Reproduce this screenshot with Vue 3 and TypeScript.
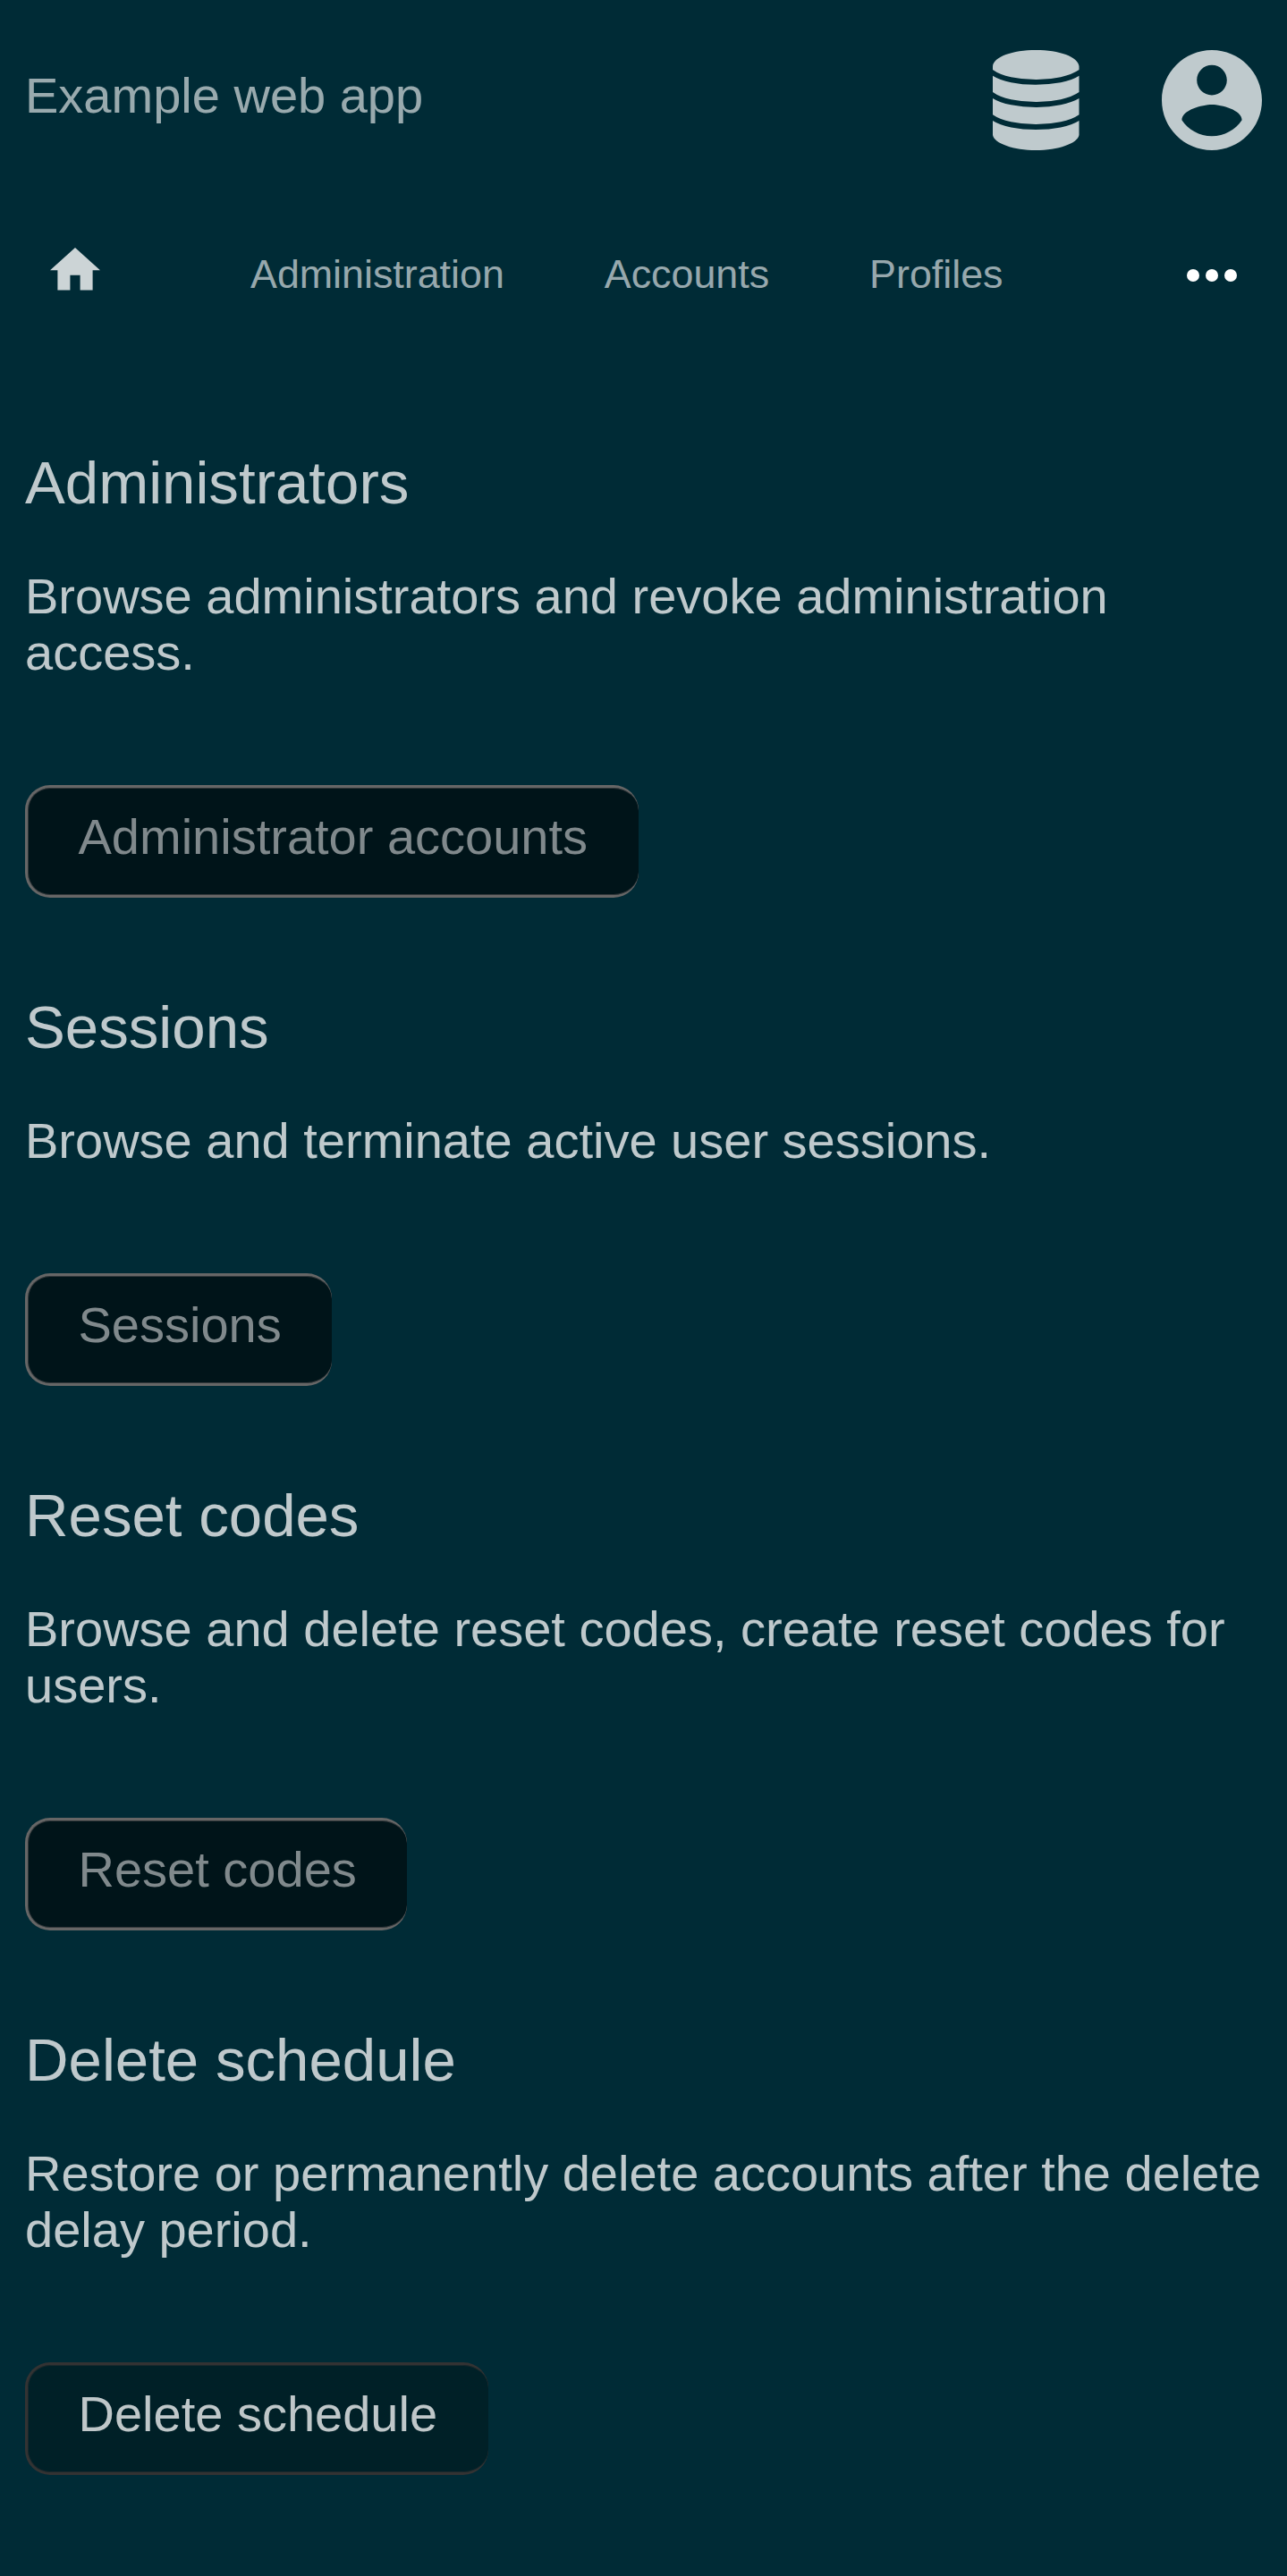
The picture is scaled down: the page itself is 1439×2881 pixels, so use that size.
<script setup lang="ts">
interface Section {
  title: string
  text: string
  action: string
  enabled?: boolean
}

const links: string[] = ['Administration', 'Accounts', 'Profiles']

const sections: Section[] = [
  {
    title: 'Administrators',
    text: 'Browse administrators and revoke administration access.',
    action: 'Administrator accounts',
  },
  {
    title: 'Sessions',
    text: 'Browse and terminate active user sessions.',
    action: 'Sessions',
  },
  {
    title: 'Reset codes',
    text: 'Browse and delete reset codes, create reset codes for users.',
    action: 'Reset codes',
  },
  {
    title: 'Delete schedule',
    text: 'Restore or permanently delete accounts after the delete delay period.',
    action: 'Delete schedule',
    enabled: true,
  },
]
</script>

<template>
  <div class="page">
    <header class="header">
      <div class="title">Example web app</div>
      <svg class="database" viewBox="0 0 96.5 112" aria-hidden="true">
        <path d="M0 18C1 7.500 22 0 48.250 0S95.500 7.500 96.500 18V22Q89 27.300 76 30.200T48.250 33T20.500 30.200T0 22Z" />
        <path d="M0 28.800Q7.500 33.600 20.500 36.200T48.250 38.700T76 36.200T96.500 28.800V47Q89 52.300 76 55.200T48.250 58T20.500 55.200T0 47Z" />
        <path d="M0 54Q7.500 58.800 20.500 61.300T48.250 63.900T76 61.300T96.500 54V72.200Q89 77.500 76 80.300T48.250 83.100T20.500 80.300T0 72.200Z" />
        <path d="M0 79Q7.500 83.800 20.500 86.400T48.250 89T76 86.400T96.500 79V95C95 104.500 73 112 48.250 112S1.500 104.500 0 95Z" />
      </svg>
      <svg class="account" viewBox="2 2 20 20" aria-hidden="true">
        <path d="M12 2C6.48 2 2 6.48 2 12s4.48 10 10 10 10-4.48 10-10S17.52 2 12 2zm0 3c1.66 0 3 1.34 3 3s-1.34 3-3 3-3-1.34-3-3 1.34-3 3-3zm0 14.2c-2.5 0-4.71-1.28-6-3.22.03-1.99 4-3.08 6-3.08 1.99 0 5.97 1.09 6 3.08-1.29 1.94-3.5 3.22-6 3.22z" />
      </svg>
    </header>

    <nav class="nav">
      <svg class="home" viewBox="2 3 20 17" aria-hidden="true">
        <path d="M10 20v-6h4v6h5v-8h3L12 3 2 12h3v8z" />
      </svg>
      <div class="links">
        <a v-for="link in links" :key="link" class="link">{{ link }}</a>
      </div>
      <svg class="more" viewBox="0 0 16 4" aria-hidden="true">
        <circle cx="2" cy="2" r="2" />
        <circle cx="8" cy="2" r="2" />
        <circle cx="14" cy="2" r="2" />
      </svg>
    </nav>

    <main class="main">
      <section v-for="s in sections" :key="s.title" class="section">
        <h2 class="heading">{{ s.title }}</h2>
        <p class="text">{{ s.text }}</p>
        <button class="button" :class="{ enabled: s.enabled }" type="button">{{ s.action }}</button>
      </section>
    </main>
  </div>
</template>

<style>
body {
  margin: 0;
  background: #002b36;
}
</style>

<style scoped>
.page {
  box-sizing: border-box;
  width: 1439px;
  height: 2881px;
  overflow: hidden;
  background: #002b36;
  color: rgba(255, 255, 255, 0.75);
  font-family: "Liberation Sans", Arial, sans-serif;
  font-size: 56px;
  line-height: 63px;
}

.header {
  display: flex;
  height: 224px;
  box-sizing: border-box;
  padding: 56px 28.5px 0 28px;
}

.title {
  flex: 1;
  padding-top: 19px;
  color: rgba(255, 255, 255, 0.6);
}

.database {
  width: 96.5px;
  height: 112px;
  margin-right: 92px;
  fill: #bfcacd;
}

.account {
  width: 112px;
  height: 112px;
  fill: #bfcacd;
}

.nav {
  display: flex;
  height: 277px;
  box-sizing: border-box;
  padding: 53px 56.5px 0 56px;
}

.home {
  width: 56px;
  height: 47.6px;
  fill: rgba(255, 255, 255, 0.8);
}

.links {
  display: flex;
  flex: 1;
  gap: 112px;
  padding: 3px 0 0 168px;
  font-size: 44.8px;
  line-height: 52px;
  color: rgba(255, 255, 255, 0.6);
}

.more {
  width: 56px;
  height: 14px;
  margin-top: 24px;
  fill: #fff;
}

.main {
  padding: 0 28px;
}

.section {
  display: flex;
  flex-direction: column;
  align-items: flex-start;
  margin-bottom: 106px;
}

.heading {
  margin: 0 0 57px;
  font-size: 67.2px;
  line-height: 77px;
  font-weight: 400;
}

.text {
  margin: 0 0 117px;
}

.button {
  --inner-edge: #33393c;
  box-sizing: border-box;
  height: 126px;
  margin: 0;
  padding: 0 56.5px 11px 56.5px;
  border: 3px solid #666;
  border-right: 0;
  border-radius: 28px;
  box-shadow:
    inset 1px 0 0 var(--inner-edge),
    inset 0 1px 0 var(--inner-edge),
    inset 0 -1px 0 var(--inner-edge);
  background: #001419;
  color: #80898c;
  font: inherit;
  white-space: nowrap;
}

.button.enabled {
  --inner-edge: #1a292d;
  border-color: #333;
  background: #002027;
  color: #bfc7c9;
}
</style>
